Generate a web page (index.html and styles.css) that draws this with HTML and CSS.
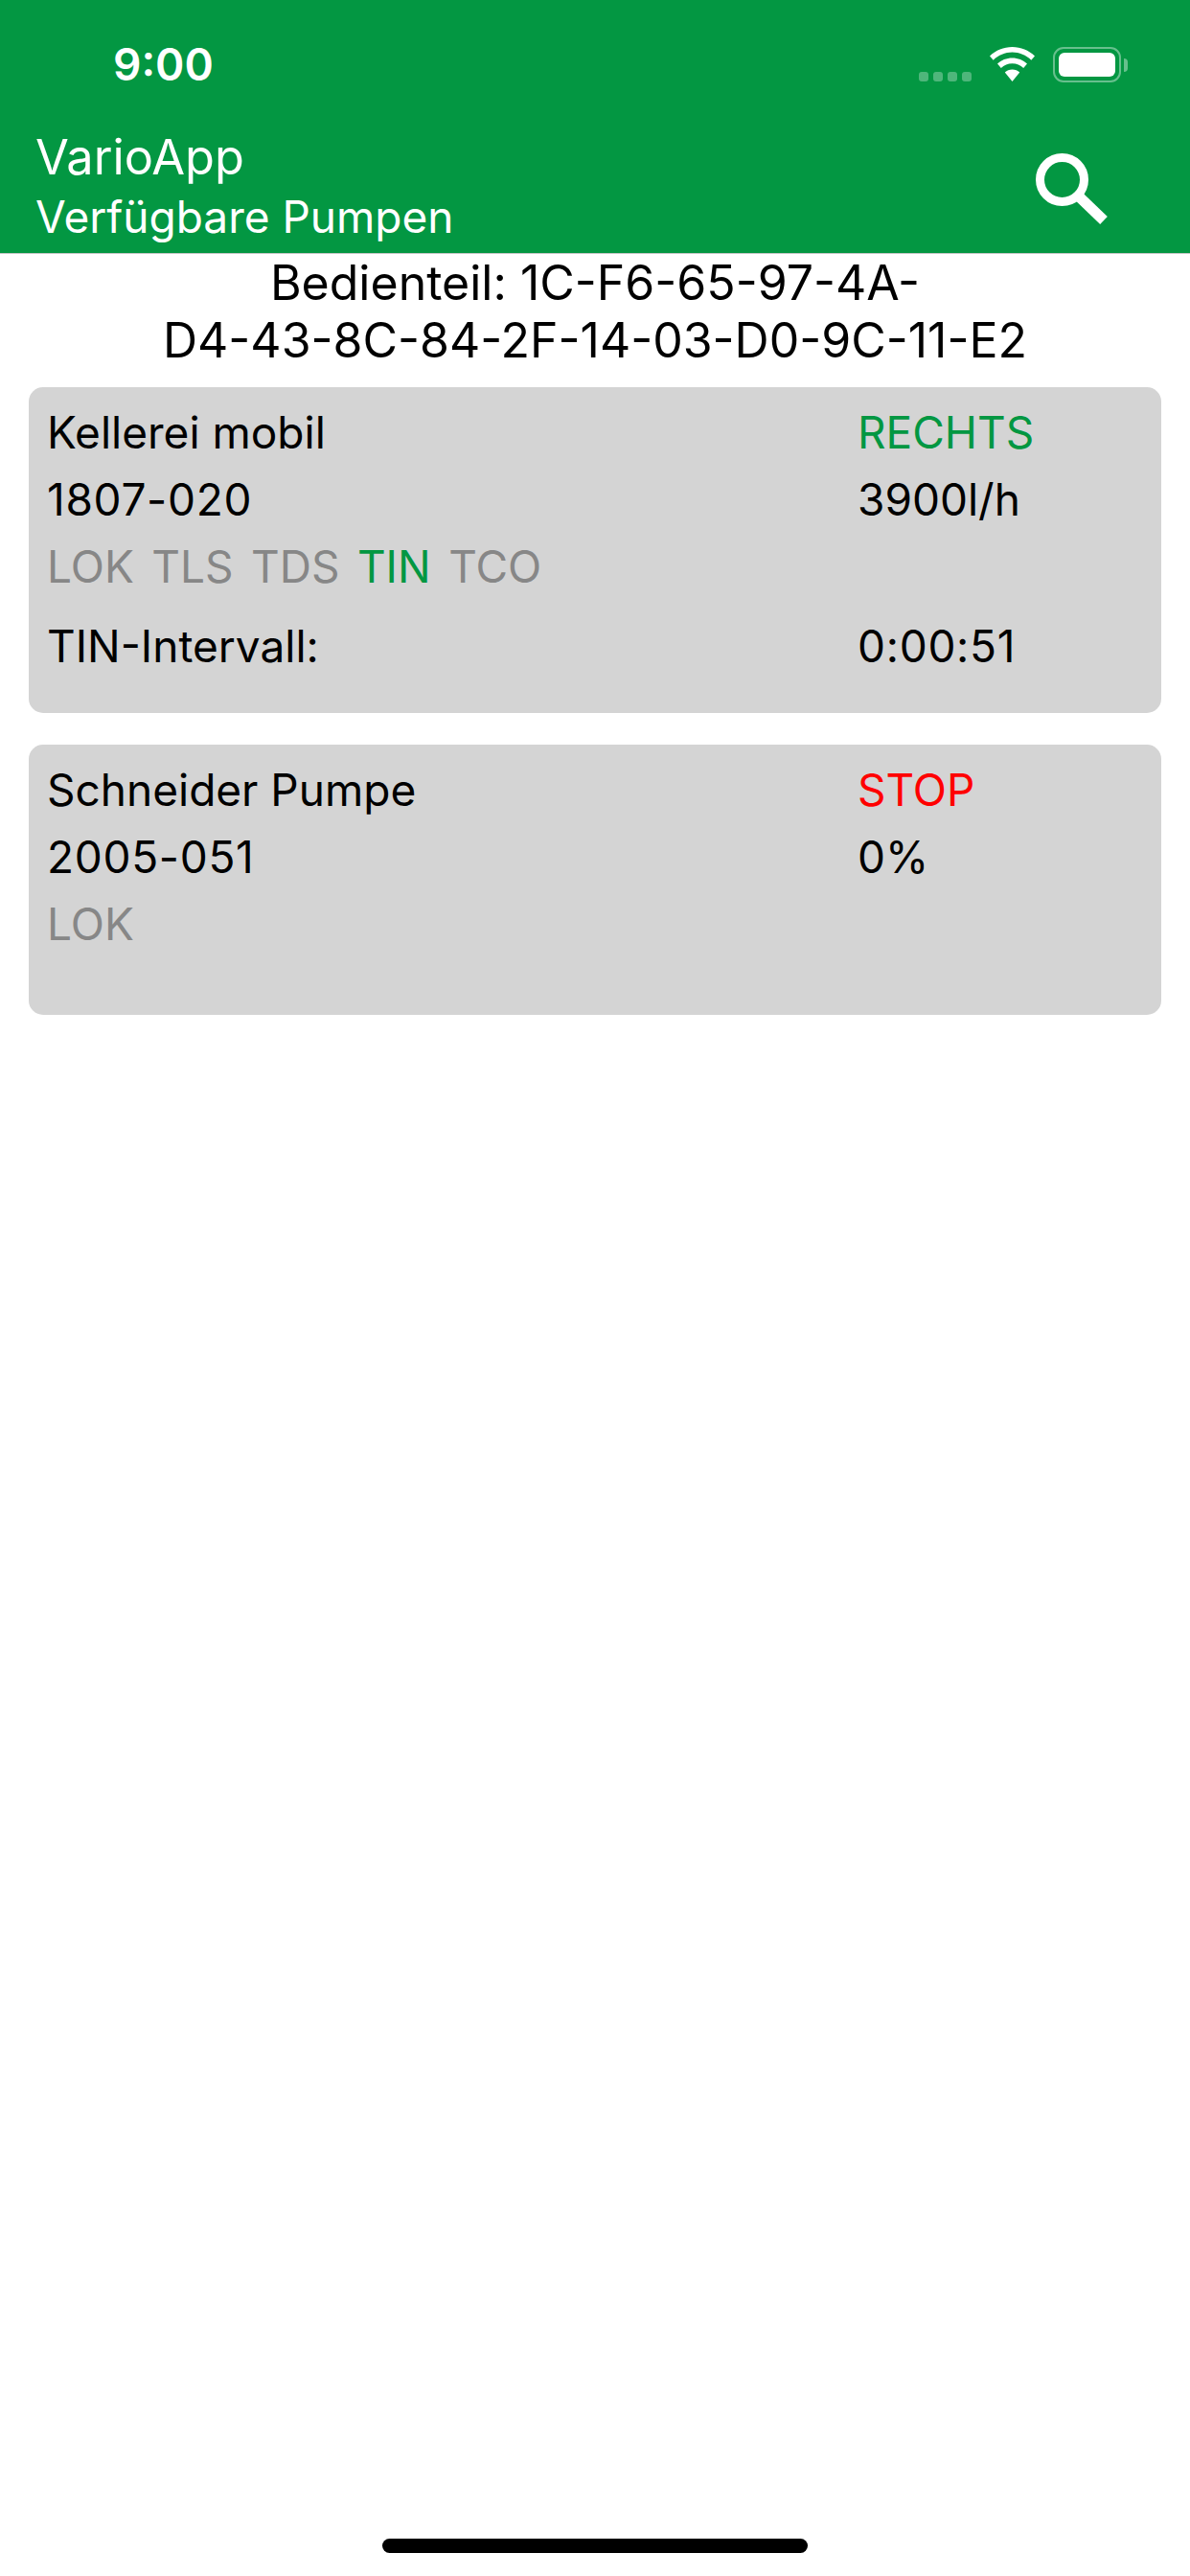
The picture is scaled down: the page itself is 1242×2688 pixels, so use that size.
FILE: index.html
```html
<!DOCTYPE html>
<html lang="en">
<head>
    <meta charset="UTF-8">
    <meta name="viewport" content="width=device-width, initial-scale=1.0">
    <title>VarioApp - Verfügbare Pumpen</title>
    <link rel="stylesheet" href="styles.css">
</head>
<body>
    <header class="app-header">
        <div class="status-bar">
            <span class="clock">9:00</span>
            <div class="status-icons">
                <div class="signal">
                    <span></span><span></span><span></span><span></span>
                </div>
                <svg class="wifi" width="47" height="37" viewBox="0 0 47 37">
                    <path fill="#fff" d="M23.5 0C14.5 0 6.4 3.4 0 9.5l3.7 4.2C9.2 8.6 16 5.6 23.5 5.6s14.300 3 19.800 8.100L47 9.500C40.600 3.400 32.500 0 23.500 0z"/>
                    <path fill="#fff" d="M23.500 11.500c-6 0-11.400 2.300-15.500 6.100l3.800 4.300c3.100-2.900 7.200-4.700 11.700-4.700s8.600 1.800 11.700 4.700l3.800-4.300c-4.100-3.800-9.500-6.100-15.500-6.100z"/>
                    <path fill="#fff" d="M23.500 23.500c-3 0-5.700 1.100-7.700 3l7.700 9.500 7.700-9.500c-2-1.900-4.700-3-7.700-3z"/>
                </svg>
                <div class="battery">
                    <div class="battery-body">
                        <div class="battery-fill"></div>
                    </div>
                    <div class="battery-nub"></div>
                </div>
            </div>
        </div>
        <div class="title-bar">
            <div class="titles">
                <h1>VarioApp</h1>
                <h2>Verfügbare Pumpen</h2>
            </div>
            <svg class="search-icon" width="76" height="76" viewBox="0 0 76 76">
                <circle cx="27.500" cy="27.500" r="23" fill="none" stroke="#fff" stroke-width="9"/>
                <path d="M45 45L71 70" fill="none" stroke="#fff" stroke-width="11"/>
            </svg>
        </div>
    </header>

    <main class="content">
        <p class="device-id">Bedienteil: 1C-F6-65-97-4A-<br>D4-43-8C-84-2F-14-03-D0-9C-11-E2</p>

        <div class="pump-card">
            <div class="pump-row">
                <span class="pump-left">Kellerei mobil</span>
                <span class="pump-right state-on">RECHTS</span>
            </div>
            <div class="pump-row">
                <span class="pump-left num">1807-020</span>
                <span class="pump-right">3900l/h</span>
            </div>
            <div class="pump-row">
                <div class="pump-left flags">
                    <span>LOK</span><span>TLS</span><span>TDS</span><span class="state-on">TIN</span><span>TCO</span>
                </div>
            </div>
            <div class="pump-row interval-row">
                <span class="pump-left">TIN-Intervall:</span>
                <span class="pump-right num">0:00:51</span>
            </div>
        </div>

        <div class="pump-card">
            <div class="pump-row">
                <span class="pump-left">Schneider Pumpe</span>
                <span class="pump-right state-stop">STOP</span>
            </div>
            <div class="pump-row">
                <span class="pump-left num">2005-051</span>
                <span class="pump-right">0%</span>
            </div>
            <div class="pump-row">
                <div class="pump-left flags">
                    <span>LOK</span>
                </div>
            </div>
        </div>
    </main>

    <div class="home-indicator"></div>
</body>
</html>
```

FILE: styles.css
```css
* {
    box-sizing: border-box;
}

html, body {
    margin: 0;
    padding: 0;
}

body {
    font-family: Inter, "Liberation Sans", sans-serif;
    background-color: #fff;
    color: #000;
    width: 1242px;
    height: 2688px;
    display: flex;
    flex-direction: column;
}

.app-header {
    background-color: #039742;
    color: #fff;
    height: 265px;
    border-bottom: 1px solid #c8c8c8;
}

.status-bar {
    height: 126px;
    display: flex;
    justify-content: space-between;
    padding: 49px 65px 0 118px;
}

.clock {
    font-size: 46px;
    font-weight: 600;
    line-height: 37px;
}

.status-icons {
    display: flex;
    align-items: flex-start;
    gap: 19px;
}

.signal {
    display: flex;
    gap: 5px;
    margin-top: 26px;
}

.signal span {
    width: 10px;
    height: 10px;
    border-radius: 3px;
    background-color: rgba(255, 255, 255, 0.3);
}

.battery {
    display: flex;
    align-items: center;
}

.battery-body {
    width: 71px;
    height: 37px;
    padding: 4px;
    border: 2px solid rgba(255, 255, 255, 0.4);
    border-radius: 11px;
}

.battery-fill {
    height: 100%;
    background-color: #fff;
    border-radius: 6px;
}

.battery-nub {
    width: 4px;
    height: 14px;
    margin-left: 3px;
    background-color: rgba(255, 255, 255, 0.4);
    border-radius: 0 4px 4px 0;
}

.title-bar {
    display: flex;
    justify-content: space-between;
    padding: 0 86px 0 37px;
}

.titles {
    padding-top: 8px;
}

.title-bar h1 {
    margin: 0;
    font-size: 50.5px;
    font-weight: 400;
    line-height: 60px;
}

.title-bar h2 {
    margin: 6px 0 0;
    font-size: 46px;
    font-weight: 400;
    line-height: 52px;
}

.search-icon {
    margin-top: 34px;
    margin-right: -1px;
}

.content {
    flex: 1;
    padding: 0 30px;
}

.device-id {
    margin: 0 0 19px;
    font-size: 50px;
    line-height: 60px;
    text-align: center;
}

.pump-card {
    height: 340px;
    margin-bottom: 33px;
    padding: 20px 19px 0;
    background-color: #d4d4d4;
    border-radius: 15px;
}

.pump-card:last-child {
    height: 282px;
}

.pump-row {
    display: flex;
    height: 70px;
    font-size: 46px;
    line-height: 54px;
}

.interval-row {
    margin-top: 13px;
}

.pump-left {
    width: 846px;
}

.num {
    letter-spacing: 0.7px;
}

.flags {
    display: flex;
    gap: 18.5px;
    color: #878787;
}

.state-on {
    color: #039742;
}

.state-stop {
    color: #ff0000;
}

.home-indicator {
    width: 444px;
    height: 15px;
    margin: 0 auto 24px;
    background-color: #000;
    border-radius: 8px;
}
```
